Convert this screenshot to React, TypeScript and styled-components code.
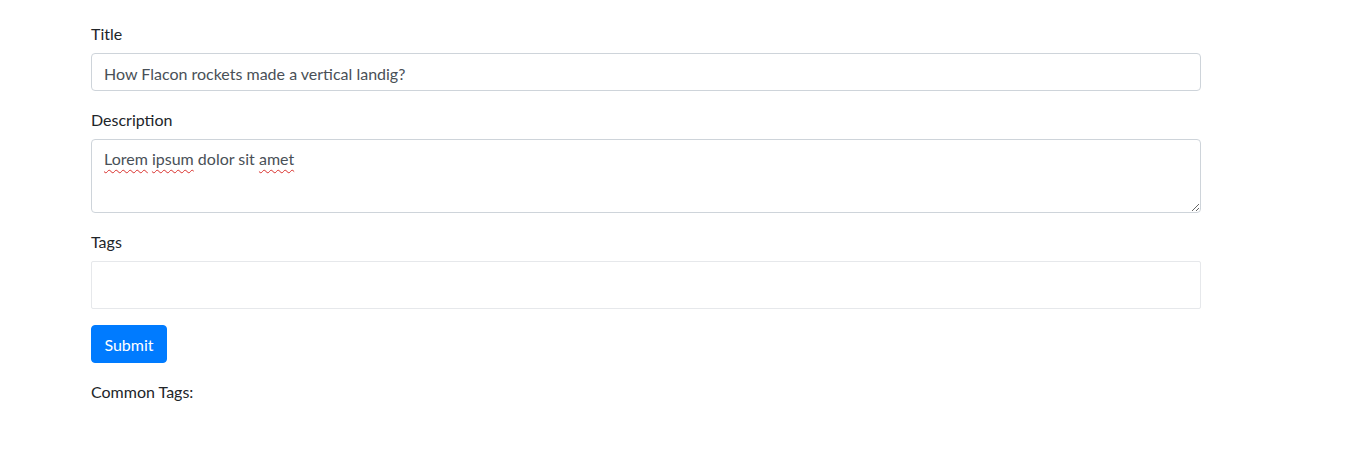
import React from 'react'
import styled, { createGlobalStyle } from 'styled-components'

const GlobalStyle = createGlobalStyle`
  body {
    margin: 0;
    background: #fff;
    font-family: 'Lato', 'Noto Sans', sans-serif;
    font-size: 16px;
    line-height: 1.5;
    color: #212529;
  }
`

const Page = styled.div`
  width: 1110px;
  margin-left: 91px;
  padding-top: 21px;
`

const FormGroup = styled.div`
  margin-bottom: 16px;
`

const Label = styled.label`
  display: block;
  padding-top: 1px;
  margin-bottom: 7px;
  line-height: 24px;
`

const Input = styled.input`
  display: block;
  box-sizing: border-box;
  width: 100%;
  height: 38px;
  padding: 7px 12px 5px;
  font: inherit;
  color: #495057;
  background: #fff;
  border: 1px solid #ced4da;
  border-radius: 4px;
  outline: none;
`

const TextArea = styled.div`
  box-sizing: border-box;
  width: 100%;
  height: 74px;
  padding: 7px 12px 5px;
  color: #495057;
  border: 1px solid #ced4da;
  border-radius: 4px;
  overflow: auto;
  resize: vertical;
`

const Misspelled = styled.span`
  text-decoration: underline wavy #d9302c;
  text-decoration-thickness: 1px;
  text-underline-offset: 4px;
`

const TagsBox = styled.div`
  box-sizing: border-box;
  width: 100%;
  height: 48px;
  border: 1px solid #e6e8eb;
  border-radius: 2px;
`

const Button = styled.button`
  display: block;
  height: 38px;
  padding: 7px 12px 5px;
  min-width: 76px;
  font: inherit;
  color: #fff;
  background: #007bff;
  border: 1px solid #007bff;
  border-radius: 4px;
  cursor: pointer;
`

const CommonTags = styled.div`
  margin-top: 17px;
`

export default function App() {
  return (
    <>
      <GlobalStyle />
      <Page>
        <FormGroup>
          <Label>Title</Label>
          <Input defaultValue="How Flacon rockets made a vertical landig?" />
        </FormGroup>
        <FormGroup>
          <Label>Description</Label>
          <TextArea role="textbox">
            <Misspelled>Lorem</Misspelled> <Misspelled>ipsum</Misspelled> dolor sit{' '}
            <Misspelled>amet</Misspelled>
          </TextArea>
        </FormGroup>
        <FormGroup>
          <Label>Tags</Label>
          <TagsBox />
        </FormGroup>
        <Button type="button">Submit</Button>
        <CommonTags>Common Tags:</CommonTags>
      </Page>
    </>
  )
}
